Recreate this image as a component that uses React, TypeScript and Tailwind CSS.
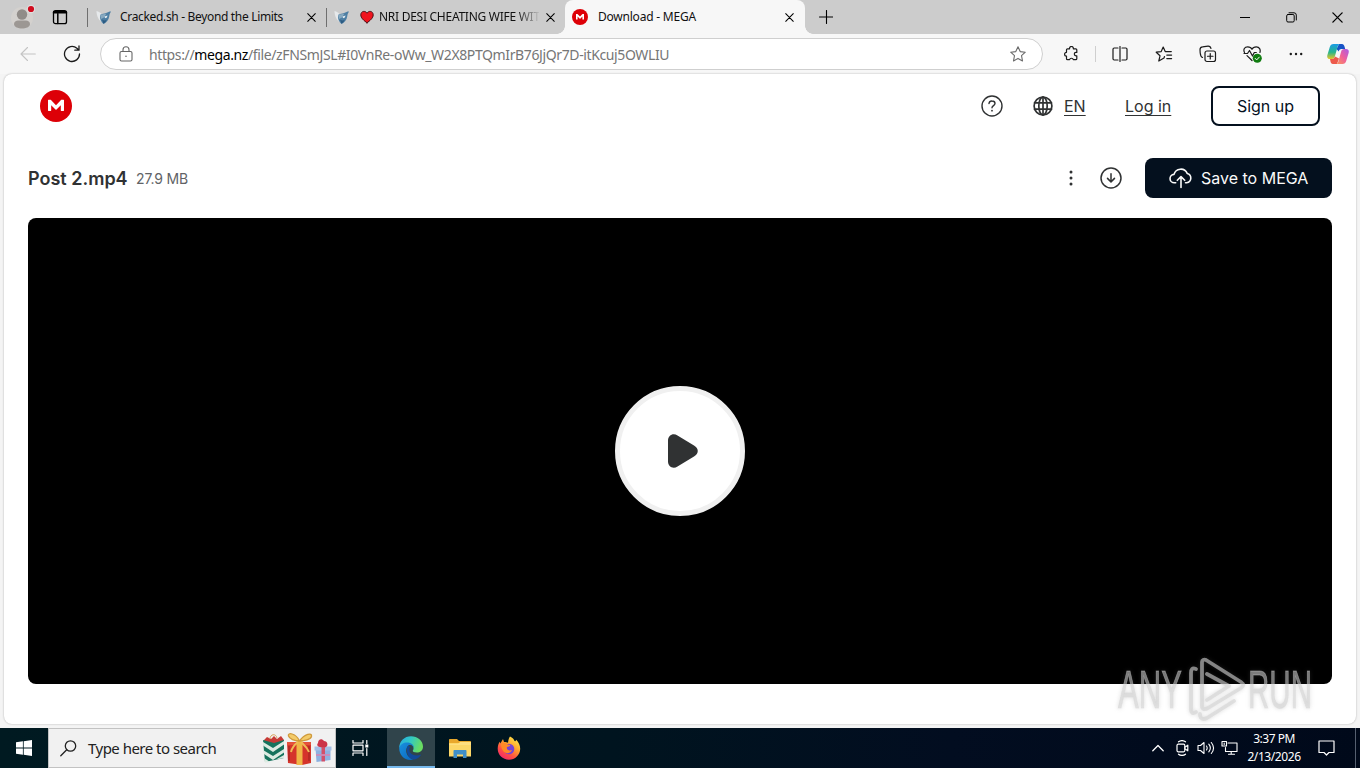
import type { ReactNode } from "react";

type IconProps = { w: number; h?: number; box?: string; className?: string; sw?: number; children: ReactNode };

function Icon({ w, h = w, box, className = "", sw = 1.1, children }: IconProps) {
  return (
    <svg
      width={w}
      height={h}
      viewBox={box ?? `0 0 ${w} ${h}`}
      fill="none"
      stroke="currentColor"
      strokeWidth={sw}
      strokeLinecap="round"
      strokeLinejoin="round"
      className={`shrink-0 ${className}`}
    >
      {children}
    </svg>
  );
}

function CloseX({ size = 9 }: { size?: number }) {
  return (
    <Icon w={size} box="0 0 10 10" sw={1.2}>
      <path d="M.8.8l8.4 8.4M9.2.8L.8 9.2" />
    </Icon>
  );
}

function BirdIcon() {
  return (
    <Icon w={16} sw={0}>
      <path d="M.5 2c2 .5 4 1.500 5 3l.5 8C3 12 .5 7 .5 2z" fill="#e6e9eb" />
      <path d="M4 6c2-1.500 4-1 6-2 2-.8 3-1.500 5-1.500-1 1.500-1.500 3-1.800 5-.5 3.500-2.700 6-5.700 7.500C5 13 3.500 10 4 6z" fill="#4d7ea3" />
      <path d="M4 6c2-1 4-.5 6.500-1.500L8 8.500 5 10z" fill="#87a9c0" />
      <path d="M8.500 7.500l3-1-.6 2-1.900.8z" fill="#e4edf2" />
      <path d="M6 10.500c2 1.500 3.500 1 5 0-1 2-2 3.300-3.500 4.200z" fill="#2c5b82" />
    </Icon>
  );
}

function MegaLogo({ size }: { size: number }) {
  return (
    <Icon w={size} box="0 0 32 32" sw={0}>
      <circle cx="16" cy="16" r="16" fill="#dd0007" />
      <path
        d="M8 10.300c0-.3.200-.5.500-.5h1.800c.3 0 .5.100.7.300l5 5.100 5-5.100c.2-.2.400-.3.700-.3h1.800c.3 0 .5.200.5.500v10.300c0 .3-.2.500-.5.500h-2.200c-.3 0-.5-.2-.5-.5v-5.400l-4.300 4.300c-.3.300-.7.300-1 0l-4.300-4.300v5.400c0 .3-.2.500-.5.500H8.500c-.3 0-.5-.2-.5-.5z"
        fill="#fff"
      />
    </Icon>
  );
}

function TabStrip() {
  return (
    <div className="flex h-[34px] shrink-0 items-center bg-[#cccccc]">
      <div className="flex w-[87px] items-center pl-[11px]">
        <Icon w={24} h={28} sw={0}>
          <circle cx="11" cy="15" r="11" fill="#d4d1ce" />
          <circle cx="11" cy="11.500" r="5.200" fill="#918c88" />
          <path d="M3 21c0-2 2-3.500 4-3.500h8c2 0 4 1.500 4 3.500 0 3-4 4.500-8 4.500S3 24 3 21z" fill="#9c9793" />
          <circle cx="20" cy="6" r="4.300" fill="#e0dedd" />
          <circle cx="20" cy="6" r="3.100" fill="#d00c1e" />
        </Icon>
        <Icon w={16} className="ml-[17px] text-black" sw={1.3}>
          <rect x="1.500" y="1.700" width="13" height="13" rx="2" />
          <path d="M1.500 3.700h13M5.800 5v9.500" strokeWidth="1.500" />
          <path d="M2 3h12" strokeWidth="2.200" />
        </Icon>
      </div>
      <div className="flex h-[19px] w-[239px] items-center border-l border-[#6f6f6f] pl-2">
        <BirdIcon />
        <span className="ml-2 w-[182px] whitespace-nowrap text-[12px] tracking-[-0.33px] text-[#111]">Cracked.sh - Beyond the Limits</span>
        <span className="ml-[5px] flex"><CloseX /></span>
      </div>
      <div className="flex h-[19px] w-[239px] items-center border-l border-[#6f6f6f] pl-[7px]">
        <BirdIcon />
        <Icon w={14} h={14} className="ml-[10px] text-[#4c1015]" sw={1}>
          <path d="M7 12.800C4 10.700.8 8 .8 4.900.8 1 5.300.2 7 3.200 8.700.2 13.200 1 13.200 4.900c0 3.100-3.200 5.800-6.200 7.900z" fill="#f0141e" />
        </Icon>
        <span className="ml-[5px] w-[160px] whitespace-nowrap text-[12px] tracking-[-0.27px] text-[#111] [mask-image:linear-gradient(to_right,#000_86%,transparent_101%)]">NRI DESI CHEATING WIFE WIT</span>
        <span className="ml-[7px] flex"><CloseX /></span>
      </div>
      <div className="relative flex h-[34px] w-[240px] items-center rounded-t-lg bg-[#f7f7f7] pl-[7px]">
        <span className="absolute bottom-0 -left-2 size-2 bg-[radial-gradient(circle_at_0_0,#cccccc_7.500px,#f7f7f7_8px)]" />
        <span className="absolute -right-2 bottom-0 size-2 bg-[radial-gradient(circle_at_100%_0,#cccccc_7.500px,#f7f7f7_8px)]" />
        <MegaLogo size={16} />
        <span className="ml-[10px] w-[187px] whitespace-nowrap text-[12px] tracking-[-0.22px] text-[#111]">Download - MEGA</span>
        <CloseX />
      </div>
      <Icon w={14} className="ml-[14px] text-black" sw={1.1}>
        <path d="M7.500 .5v13M.5 7h13.500" />
      </Icon>
      <div className="ml-auto flex text-black">
        <div className="flex w-[46px] justify-center">
          <Icon w={10} sw={1}><path d="M0 5.500h10" /></Icon>
        </div>
        <div className="flex w-[46px] justify-center">
          <Icon w={11} sw={1}>
            <rect x=".7" y="2.500" width="7.500" height="7.500" rx="1.300" />
            <path d="M3 .8h5a2.300 2.300 0 0 1 2.300 2.300V8" />
          </Icon>
        </div>
        <div className="flex w-[46px] justify-center"><CloseX size={11} /></div>
      </div>
    </div>
  );
}

function Toolbar() {
  return (
    <div className="flex h-10 shrink-0 items-center bg-[#f7f7f7] text-[#1b1b1b]">
      <div className="flex w-[100px] items-center pl-5">
        <Icon w={16} className="text-[#c4c4c4]"><path d="M15.300 8H1M7.500 1.500L1 8l6.500 6.500" /></Icon>
        <Icon w={18} className="ml-[27px]" sw={1.3}>
          <path d="M16.500 9a7.500 7.500 0 1 1-2.600-5.700L15.800 5M16 1v4.200h-4.200" />
        </Icon>
      </div>
      <div className="flex h-8 w-[943px] items-center rounded-full border border-[#cfcfcf] bg-white pr-4 pl-[18px]">
        <Icon w={14} h={16} className="text-[#666]">
          <rect x="1" y="5.500" width="12" height="9.500" rx="1.500" />
          <path d="M4 5.500V3.700a3 3 0 0 1 6 0v1.800" />
          <circle cx="7" cy="10.300" r=".8" fill="currentColor" stroke="none" />
        </Icon>
        <span className="ml-[16px] whitespace-nowrap text-[14px] tracking-[-0.38px] text-[#767676]">
          https://<span className="text-black">mega.nz</span>/file/zFNSmJSL#I0VnRe-oWw_W2X8PTQmIrB76JjQr7D-itKcuj5OWLIU
        </span>
        <Icon w={16} className="ml-auto text-[#6b6b6b]">
          <path d="M8 .8l2.200 4.800 5.100.6-3.800 3.500 1 5.200L8 12.400l-4.500 2.500 1-5.200L.7 6.200l5.100-.6z" />
        </Icon>
      </div>
      <div className="flex w-[53px] items-center justify-between pl-[20px]">
        <Icon w={16} sw={1.2}>
          <path d="M4.500 2.800H6.600a1.900 1.900 0 1 1 3.700 0h2.500c.6 0 1 .4 1 1v2.600h-.8a1.700 1.700 0 0 0 0 3.400h.8v2.900c0 .6-.4 1-1 1h-2.500a1.900 1.900 0 0 0-3.700 0H4.500c-.6 0-1-.4-1-1v-2.600a1.900 1.900 0 1 1 0-3.800V3.800c0-.6.4-1 1-1z" />
        </Icon>
        <span className="h-4 w-px bg-[#cfcfcf]" />
      </div>
      <div className="flex grow items-center pl-[2px]">
        <div className="flex w-[43px] justify-center">
          <Icon w={16} sw={1.2}>
            <path d="M6 2H2.200C1.500 2 1 2.500 1 3.200v9.600c0 .7.500 1.200 1.200 1.200H6M10 2h3.800c.7 0 1.200.5 1.200 1.200v9.600c0 .7-.5 1.200-1.200 1.200H10M8 .5v15" />
          </Icon>
        </div>
        <div className="flex w-[45px] justify-center">
          <Icon w={18} h={16} sw={1.2}>
            <path d="M9.500 10.500L9 12l-5.200 3 1.200-5.200L1.200 6.200l5-.6L8.200 1l2 4.600M10.300 5.600h6M11.800 9.100h4.800M11.800 12.600h4.800" />
          </Icon>
        </div>
        <div className="flex w-[44px] justify-center">
          <Icon w={18} h={18} sw={1.2}>
            <rect x="6" y="6" width="10.500" height="10.500" rx="2" />
            <path d="M11.250 8.500v5.500M8.500 11.250H14M3.500 12.500C2 12 1.500 10.500 1.200 8L1 4.800C1 3 2 2 3.500 1.900L9 1.200c1.700-.1 2.600.8 2.900 2.300" />
          </Icon>
        </div>
        <div className="flex w-[44px] justify-center">
          <Icon w={19} h={18} sw={1.2}>
            <path d="M9 15.500L4 10.600M1.500 7.500C0 4.500 1.500 1.800 4.700 1.800c2 0 3.600 1 4.300 2.500.7-1.500 2.300-2.500 4.300-2.500 3.200 0 4.500 3 3.600 5.700M1 8.500h3.500L6.500 5.500l3 5.500 1.800-3.500h2" />
            <circle cx="14.300" cy="13.300" r="4.500" fill="#107c10" stroke="none" />
            <path d="M12.200 13.400l1.500 1.500 2.600-2.800" stroke="#fff" strokeWidth="1" />
          </Icon>
        </div>
        <div className="flex w-[44px] justify-center">
          <Icon w={14} h={4} sw={0}>
            <g fill="#1b1b1b"><circle cx="1.800" cy="2" r="1.200" /><circle cx="7" cy="2" r="1.200" /><circle cx="12.200" cy="2" r="1.200" /></g>
          </Icon>
        </div>
        <div className="flex w-[40px] justify-center">
          <svg width="22" height="22" viewBox="0 0 22 22">
            <defs>
              <linearGradient id="cpA" x1="0" y1="0" x2="0" y2="1">
                <stop offset="0" stopColor="#1a9be6" /><stop offset=".55" stopColor="#28b68c" /><stop offset="1" stopColor="#e9c526" />
              </linearGradient>
              <linearGradient id="cpB" x1="1" y1="0" x2="0" y2="1">
                <stop offset="0" stopColor="#a95ce8" /><stop offset=".5" stopColor="#f0609a" /><stop offset="1" stopColor="#fb9a55" />
              </linearGradient>
            </defs>
            <path d="M12 1h3c1.400 0 2 1 2.500 2.600l.7 2.400h-3.700c-1.500 0-2.200.8-2.700 2.400L9.500 6z" fill="#1753c6" />
            <path d="M6.500 1H13c-1.500.3-2 1.200-2.500 3L8 13c-.6 2.200-1.500 3-3.300 3H2.900C.5 16-.2 14.200.4 12L2.800 4C3.400 2 4.500 1 6.500 1z" fill="url(#cpA)" />
            <path d="M10 21H5.800c-1.300 0-2-1-2.300-2.400L3 16h2c1.700 0 2.500-1 3-2.500l4 2z" fill="#ed5a4c" />
            <path d="M15.500 21H9c1.500-.3 2-1.200 2.500-3L14 9c.6-2.200 1.500-3 3.300-3h1.800c2.400 0 3.100 1.800 2.500 4l-2.400 8c-.6 2-1.700 3-3.700 3z" fill="url(#cpB)" />
          </svg>
        </div>
      </div>
    </div>
  );
}

function MegaHeader() {
  return (
    <header className="flex h-[64px] items-center pr-9 pl-9 font-[Inter,sans-serif] text-[16px] text-[#303233]">
      <MegaLogo size={32} />
      <Icon w={22} className="ml-auto" sw={1.4}>
        <circle cx="11" cy="11" r="10" />
        <path d="M8 8.500A2.900 2.900 0 0 1 11 6c1.700 0 3 1 3 2.600 0 1.900-3 2.200-3 4.200" />
        <circle cx="11" cy="15.700" r=".9" fill="currentColor" stroke="none" />
      </Icon>
      <Icon w={20} className="ml-[30px]" sw={1.7}>
        <circle cx="10" cy="10" r="8.900" />
        <ellipse cx="10" cy="10" rx="4.200" ry="8.900" />
        <path d="M10 1v18M1.500 6.800h17M1.500 13.200h17" />
      </Icon>
      <a className="ml-[11px] w-[22px] underline decoration-1 underline-offset-[3px]">EN</a>
      <a className="ml-[39px] w-[46px] whitespace-nowrap underline decoration-1 underline-offset-[3px]">Log in</a>
      <button className="ml-10 h-10 w-[109px] rounded-lg border-2 border-[#04101e] text-[#04101e]">Sign up</button>
    </header>
  );
}

function FileBar() {
  return (
    <div className="mt-[20px] flex h-10 items-center font-[Inter,sans-serif] text-[#303233]">
      <span className="w-[100px] whitespace-nowrap text-[18px] font-semibold">Post 2.mp4</span>
      <span className="ml-2 text-[14px] tracking-[-0.15px] text-[#616366]">27.9 MB</span>
      <Icon w={4} h={16} className="ml-auto" sw={0}>
        <g fill="#303233"><circle cx="2" cy="2" r="1.500" /><circle cx="2" cy="8" r="1.500" /><circle cx="2" cy="14" r="1.500" /></g>
      </Icon>
      <Icon w={22} className="ml-[27px]" sw={1.5}>
        <circle cx="11" cy="11" r="10" />
        <path d="M11 6.800v8M7.500 11.400l3.500 3.500 3.500-3.500" />
      </Icon>
      <button className="ml-[23px] flex h-10 w-[187px] items-center rounded-lg bg-[#04101e] pl-6 text-[16px] text-[#fafafa]">
        <Icon w={24} h={22} sw={1.6}>
          <path d="M6.700 15.800H5.500A4.200 4.200 0 0 1 5 7.400 7 7 0 0 1 18.200 6.400 4.800 4.800 0 0 1 17.700 15.800H16.500M12 20.500V9.800M8.300 13.300L12 9.600l3.700 3.700" />
        </Icon>
        <span className="ml-[8px] whitespace-nowrap">Save to MEGA</span>
      </button>
    </div>
  );
}

function Watermark() {
  return (
    <svg width="212" height="70" viewBox="0 0 212 70" className="pointer-events-none absolute top-[654px] left-[1112px]">
      <g
        fontFamily="'Liberation Sans', Arial, sans-serif"
        fontSize="54"
        fill="#d4d4d4"
        fillOpacity=".55"
        className="[filter:drop-shadow(0_0_2px_rgba(110,110,110,0.4))]"
      >
        <g stroke="#d4d4d4" strokeOpacity=".4" strokeWidth="1">
          <text x="6" y="54" textLength="64" lengthAdjust="spacingAndGlyphs">ANY</text>
          <text x="136" y="54" textLength="64" lengthAdjust="spacingAndGlyphs">RUN</text>
        </g>
        <g fill="none" stroke="#d4d4d4" strokeOpacity=".6" strokeWidth="3.800" strokeLinejoin="round" strokeLinecap="round">
          <path d="M84 15c-4-1.500-5 .5-5 4v36c0 4 2 5 5 3" />
          <path d="M90 8c0-2 2-3 4-2l35 22c3 2 3 4 0 6L96 54c-4 2-6 1-6-2z" />
          <path d="M95 20l22 12-22 14M88 60c0 5 3 6 7 4l27-17" />
        </g>
      </g>
    </svg>
  );
}

function Gifts() {
  return (
    <svg width="70" height="36" viewBox="0 0 70 36" className="shrink-0">
      <path d="M2 10l3-3 4 2 3-3 3 3 4-3 3 4v3H2z" fill="#c63a36" />
      <path d="M8 9c0-5 6-6 7-1" fill="none" stroke="#d9a45c" />
      <path d="M1 10l11 3 10-3v18L3 32z" fill="#16735d" />
      <path d="M1 12l10 6L22 11v3.500L11 22 1 15.500zM1 20l10 6 11-7v3.500L11 30l-9-6zM2 28l6 4-5 .5zM22 25v3l-8 1.500z" fill="#dcebe2" />
      <path d="M25 12h24v21l-9 2-14-2z" fill="#d5342b" />
      <path d="M25 12h24v3H25z" fill="#e5513a" />
      <path d="M26 16h2v15h-2zM46 16h2v15h-2z" fill="#b92a25" />
      <path d="M34.500 11h6v24h-6z" fill="#f0b647" />
      <path d="M37.500 11C34 3 25 2 26.500 6c1 3 6 5 11 5 5-7 13-9 12-4.500-1 3-7 4.500-12 4.500z" fill="#f3cb69" stroke="#cf9a3c" strokeWidth="1.300" />
      <path d="M36 12c-4 3-6 6-7 10M39 12c3 3 6 5 8 10" fill="none" stroke="#eebb55" strokeWidth="2" />
      <path d="M53.500 18h15v12l-14 2z" fill="#8db1e0" />
      <path d="M52.500 16.500h17v4h-17z" fill="#a4bfe6" />
      <path d="M59.500 17h3.500v14.500h-3.500z" fill="#d2506a" />
      <path d="M61 17c-5 1-7-2-5-4 0-4 4-5 6-2 3 0 4 3 3 5-1 1.500-2 1.500-4 1z" fill="#cc3449" />
      <path d="M54 25h14" stroke="#cf8bb7" strokeWidth="1.800" />
    </svg>
  );
}

function EdgeIcon() {
  return (
    <svg width="24" height="24" viewBox="0 0 24 24">
      <defs>
        <linearGradient id="edA" x1="0" y1="0" x2="1" y2=".3">
          <stop offset="0" stopColor="#27a8e4" /><stop offset=".5" stopColor="#31c8c5" /><stop offset="1" stopColor="#69dd62" />
        </linearGradient>
        <linearGradient id="edB" x1="0" y1="0" x2="1" y2="1">
          <stop offset="0" stopColor="#1a91df" /><stop offset="1" stopColor="#0a65bd" />
        </linearGradient>
      </defs>
      <path d="M.2 12C.2 5 5.500.2 12 .2S24 5 24 10.500c0 4-3 6-6.200 6-2.800 0-4.300-1-4-2 1.400-1.300 1.200-5.500-3-6C5 8 1 10 .2 12z" fill="url(#edA)" />
      <path d="M.2 12C1 8.500 4.500 6.500 8 6.500c4.500 0 7 2.600 7 5.500-1-2.200-2.500-3.500-4.200-3.500-3 1.500-4.300 5-3.300 8.500.8 3 3.500 5.800 7 6.600C6.500 25.500.2 20 .2 12z" fill="url(#edB)" />
      <path d="M8.200 11c-1.600 7 3 12.500 6.700 12.500 3 0 6-2.500 7.300-5-4 2-9 .8-10.700-1.500-1.600-2-1.500-4.500-.5-6.300C10 9.500 8.700 10 8.200 11z" fill="#12499a" />
    </svg>
  );
}

function FolderIcon() {
  return (
    <svg width="22" height="19" viewBox="0 0 22 19">
      <path d="M0 1c0-.6.400-1 1-1h7l2 2h11c.6 0 1 .4 1 1v14H0z" fill="#e9a82c" />
      <path d="M0 4h22v13.500H0z" fill="#fcd768" />
      <path d="M0 5h9l2-2h11v3H0z" fill="#ffdf80" />
      <path d="M4.500 19v-7c0-.6.400-1 1-1h11c.6 0 1 .4 1 1v7h-3.500v-3.500H8V19z" fill="#3f8fc8" />
    </svg>
  );
}

function FirefoxIcon() {
  return (
    <svg width="24" height="24" viewBox="0 0 24 24">
      <defs>
        <linearGradient id="ffA" x1=".85" y1="0" x2=".2" y2="1">
          <stop offset="0" stopColor="#fff04e" /><stop offset=".4" stopColor="#ffa22c" /><stop offset=".7" stopColor="#ff4f43" /><stop offset="1" stopColor="#f12371" />
        </linearGradient>
      </defs>
      <path d="M13 .5c2.500 1 4 3 4.500 4.600 1 .3 1.300-.2 1.700-1.400 2.500 2.500 4 5.800 4 9A11.200 11.200 0 0 1 12 23.700C5.700 23.700.7 19 .7 12.800c0-2.800.8-5.500 2.200-7l.5 1.700L6 3l1 3c2 0 3 .3 4 .7.300-2.500.8-4.500 2-6.200z" fill="url(#ffA)" />
      <circle cx="12" cy="13" r="5.300" fill="#7542d6" />
      <path d="M4 8c2-1.500 4-1.500 6 0 1 .7 2 .8 3.300.9-.4 1.500-2 1.900-3.300 2.200-1 2.500 2 4.300 5 3-1.500 3.400-5.500 4-8 2C5 14 4 11 4 8z" fill="#ff8a26" />
    </svg>
  );
}

function Taskbar() {
  return (
    <div className="flex h-10 shrink-0 items-center bg-[linear-gradient(to_right,#001a21_0%,#00141f_45%,#020d20_70%,#00091a_100%)] text-white">
      <div className="flex w-12 justify-center">
        <svg width="16" height="16" viewBox="0 0 16 16" fill="#fff">
          <path d="M0 2.300L6.900 1.300v6.300H0zM7.700 1.200L16 0v7.600H7.700zM0 8.400h6.900v6.300L0 13.700zM7.700 8.400H16V16l-8.300-1.200z" />
        </svg>
      </div>
      <div className="flex h-10 w-[288px] items-center border border-[#c2c2c2] bg-[#f1f1f1] pl-[11px] text-[#222]">
        <Icon w={17} sw={1.3}><circle cx="10.500" cy="6" r="5.200" /><path d="M6.700 9.800L.8 15.800" /></Icon>
        <span className="ml-[11px] w-[174px] whitespace-nowrap text-[15px] tracking-[-0.52px]">Type here to search</span>
        <Gifts />
      </div>
      <div className="flex w-[51px] justify-center pr-[2px]">
        <Icon w={17} h={16} sw={1.2}>
          <path d="M1 .5V3h10V.5M1 15.500V13h10v2.500M1 5.200h10v5.600H1zM14.800.5v3M14.800 8.500v7" />
          <path d="M13.300 4.500h3v3h-3z" fill="#fff" stroke="none" />
        </Icon>
      </div>
      <div className="flex h-10 w-12 items-center justify-center border-b-2 border-[#76b9ed] bg-[#30444b] pt-[2px]"><EdgeIcon /></div>
      <div className="flex w-[49px] justify-center"><FolderIcon /></div>
      <div className="flex w-[49px] justify-center"><FirefoxIcon /></div>
      <div className="ml-auto flex items-center">
        <Icon w={12} h={8} sw={1.3}><path d="M.8 6.800L6 1.500l5.200 5.300" /></Icon>
        <Icon w={14} h={16} className="ml-[12px]" sw={1.2}>
          <rect x="1" y="4.200" width="7.800" height="7.600" rx="1.200" />
          <path d="M8.800 7.200L11.800 5.200v5.600L8.800 8.800M2.500 1.800C4.500.4 7.500.4 9.500 1.800M2.500 14.200c2 1.400 5 1.400 7 0" />
        </Icon>
        <Icon w={18} h={16} className="ml-[7px]" sw={1.1}>
          <path d="M1 5.500h2.500L7 2.500v11L3.500 10.500H1zM9.500 6c.8 1.200.8 2.800 0 4M11.800 4.200c1.800 2.200 1.800 5.400 0 7.600M14.300 2.500c2.700 3.300 2.700 7.700 0 11" />
        </Icon>
        <Icon w={17} h={16} className="ml-[6px]" sw={1.1}>
          <path d="M7 3h9v8.500H4.500V7.500M10.200 11.500V14M7.500 14.200h6M1 1.500h4.500V6H1zM3.200 3v1.500" />
        </Icon>
        <div className="ml-[6px] w-[60px] text-center text-[12px] leading-[18px] tracking-[-0.5px] whitespace-nowrap">
          <div>3:37 PM</div>
          <div className="tracking-[-0.42px]">2/13/2026</div>
        </div>
        <Icon w={17} h={17} className="ml-[14px]" sw={1.2}>
          <path d="M1 1h15v11.500h-5L8.500 15 6 12.500H1z" />
        </Icon>
        <span className="ml-[20px] h-10 w-px bg-[#566070]" />
        <span className="w-[4px]" />
      </div>
    </div>
  );
}

export default function App() {
  return (
    <div className="relative flex h-[768px] w-[1360px] flex-col overflow-hidden bg-[#f4f4f4] font-['Noto_Sans',sans-serif]">
      <TabStrip />
      <Toolbar />
      <main className="mx-1 mb-1 h-[650px] rounded-lg bg-white shadow-[0_0_2px_rgba(0,0,0,0.3)]">
        <MegaHeader />
        <div className="px-6">
          <FileBar />
          <div className="mt-[20px] flex h-[466px] items-center justify-center rounded-lg bg-black">
            <div className="flex size-[130px] items-center justify-center rounded-full border-[5px] border-[#f0f0f0] bg-white">
              <Icon w={32} h={36} className="ml-[6px]" sw={0}>
                <path d="M1 7.500c0-5 5-8 9.500-5L27 12.500c5 3 5 8 0 11l-16.500 10C6 36.500 1 33.500 1 28.500z" fill="#303233" />
              </Icon>
            </div>
          </div>
        </div>
      </main>
      <Taskbar />
      <Watermark />
    </div>
  );
}
